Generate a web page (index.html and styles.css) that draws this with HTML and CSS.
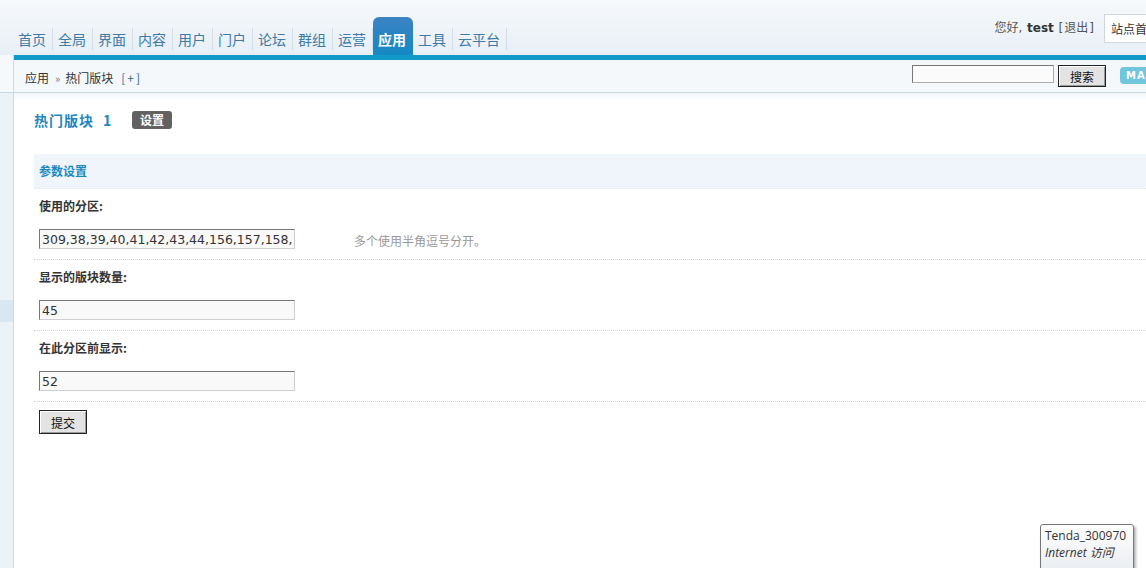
FILE: index.html
```html
<!DOCTYPE html>
<html lang="zh-CN">
<head>
  <meta charset="UTF-8" />
  <title>管理中心 - 热门版块</title>
  <link rel="stylesheet" href="styles.css">
</head>
<body>

<div class="page">
  <div class="header">
    <ul class="nav">
      <li><a href="#">首页</a></li>
      <li><a href="#">全局</a></li>
      <li><a href="#">界面</a></li>
      <li><a href="#">内容</a></li>
      <li><a href="#">用户</a></li>
      <li><a href="#">门户</a></li>
      <li><a href="#">论坛</a></li>
      <li><a href="#">群组</a></li>
      <li><a href="#">运营</a></li>
      <li class="on"><a href="#">应用</a></li>
      <li><a href="#">工具</a></li>
      <li><a href="#">云平台</a></li>
    </ul>
    <div class="userbar">
      <span class="hello">您好, <b>test</b> [<a href="#">退出</a>]</span>
      <a href="#" class="sitehome">站点首页</a>
    </div>
  </div>

  <div class="frame">
    <div class="side">
      <div class="side-top"></div>
      <div class="side-menu">
        <div class="side-item current"></div>
      </div>
    </div>

    <div class="main">
      <div class="blueline"></div>
      <div class="crumb">
        <div class="crumb-path">应用<em>&raquo;</em>热门版块<a href="#">[+]</a></div>
        <form class="search">
          <input type="text" class="search-txt">
          <button type="button" class="btn">搜索</button>
        </form>
        <span class="map">MAP</span>
      </div>

      <div class="content">
        <div class="title">
          <h3>热门版块<span class="num">1</span></h3>
          <span class="tag">设置</span>
        </div>

        <div class="tb">
          <div class="tb-head">参数设置</div>

          <div class="tb-row">
            <label class="tb-label">使用的分区:</label>
            <div class="tb-field">
              <input type="text" class="txt" value="309,38,39,40,41,42,43,44,156,157,158,159,160">
              <span class="tips">多个使用半角逗号分开。</span>
            </div>
          </div>

          <div class="tb-row">
            <label class="tb-label">显示的版块数量:</label>
            <div class="tb-field">
              <input type="text" class="txt" value="45">
            </div>
          </div>

          <div class="tb-row">
            <label class="tb-label">在此分区前显示:</label>
            <div class="tb-field">
              <input type="text" class="txt" value="52">
            </div>
          </div>

          <div class="tb-foot">
            <button type="button" class="btn submit">提交</button>
          </div>
        </div>
      </div>
    </div>
  </div>

  <div class="tip">
    <div>Tenda_300970</div>
    <div class="tip-sub">Internet 访问</div>
  </div>
</div>

</body>
</html>
```

FILE: styles.css
```css
html {
  overflow: hidden;
}

body {
  margin: 0;
  padding: 0;
  font-family: "DejaVu Sans", "Noto Sans CJK SC", sans-serif;
  font-size: 12px;
  color: #333;
  background: #fff;
}

a {
  text-decoration: none;
  color: inherit;
}

.page {
  width: 1180px;
  height: 568px;
  position: relative;
  display: flex;
  flex-direction: column;
}

/* header */
.header {
  height: 55px;
  display: flex;
  justify-content: space-between;
  background: linear-gradient(#f7f9fb, #e7eff6);
}

.nav {
  list-style: none;
  margin: 0;
  padding: 0 0 0 13px;
  display: flex;
  align-items: flex-end;
}

.nav li a {
  display: block;
  padding: 0 6px 0 5px;
  margin-bottom: 5px;
  line-height: 22px;
  font-family: "Noto Sans CJK SC", sans-serif;
  font-size: 14px;
  color: #3e7aa4;
  border-right: 1px solid #d3dee7;
}

.nav li.on a {
  padding-top: 11px;
  padding-bottom: 5px;
  margin-bottom: 0;
  color: #fff;
  font-weight: bold;
  border-right-color: transparent;
  border-radius: 6px 6px 0 0;
  background: linear-gradient(#3c82c2, #1589c4);
}

.userbar {
  display: flex;
  align-items: flex-start;
  padding: 14px 6px 0 0;
}

.hello {
  line-height: 28px;
  margin-right: 10px;
  color: #555;
  word-spacing: -1px;
}

.hello b {
  color: #333;
  margin: 0 2px;
}

.hello a {
  margin: 0 1px;
}

.sitehome {
  display: block;
  height: 27px;
  line-height: 27px;
  padding: 0 14px 0 6px;
  border: 1px solid #cfd6dc;
  background: #fff;
  font-family: "Noto Sans CJK SC", sans-serif;
  color: #333;
}

/* frame */
.frame {
  flex: 1;
  display: flex;
}

.side {
  width: 13px;
  border-right: 1px solid #c4dbeb;
  display: flex;
  flex-direction: column;
}

.side-top {
  height: 37px;
  background: #f6f9fb;
  border-bottom: 1px solid #c7d8e4;
}

.side-menu {
  flex: 1;
  background: #ebf3f9;
  padding-top: 207px;
}

.side-item {
  height: 22px;
}

.side-item.current {
  background: #d9e7f2;
}

.main {
  flex: 1;
  display: flex;
  flex-direction: column;
}

.blueline {
  height: 5px;
  background: #1399c9;
}

.crumb {
  height: 32px;
  display: flex;
  align-items: center;
  padding: 0 14px 0 11px;
  background: #f4f8fb;
  border-bottom: 1px solid #c7d8e4;
}

.crumb-path {
  flex: 1;
  padding-top: 3px;
  font-family: "Noto Sans CJK SC", sans-serif;
}

.crumb-path em {
  font-style: normal;
  color: #777;
  font-size: 11px;
  margin: 0 5px 0 6px;
}

.crumb-path a {
  color: #2c6d99;
  margin-left: 8px;
  letter-spacing: 2px;
}

.search {
  display: flex;
  align-items: flex-start;
  margin: 0 14px 0 0;
  height: 22px;
}

.search-txt {
  width: 138px;
  height: 14px;
  padding: 1px;
  margin: 0 4px 0 0;
  border: 1px solid #aaa;
  border-top-color: #777;
  border-left-color: #777;
  background: #fbfbfb;
}

.btn {
  width: 48px;
  height: 22px;
  padding: 0;
  font-family: "Noto Sans CJK SC", sans-serif;
  font-size: 12px;
  color: #111;
  background: #e3e3e3;
  border: 1px solid #222;
  box-shadow: inset 1px 1px 0 #fff, inset -1px -1px 0 #999;
  cursor: pointer;
}

.map {
  display: block;
  width: 40px;
  height: 17px;
  line-height: 17px;
  margin-bottom: 1px;
  padding-left: 6px;
  border-radius: 4px;
  background: #70c6dc;
  color: #fff;
  font-weight: bold;
  font-size: 10px;
  letter-spacing: 1px;
}

/* content */
.content {
  flex: 1;
  padding: 0 0 0 20px;
  background: linear-gradient(#f1f6fa, #fff 8px);
}

.title {
  display: flex;
  align-items: center;
  padding-top: 18px;
  height: 18px;
}

.title h3 {
  width: 98px;
  margin: 0;
  font-family: "Noto Sans CJK SC", sans-serif;
  font-size: 14px;
  line-height: 18px;
  color: #2286bf;
  letter-spacing: 1px;
}

.title .num {
  margin-left: 9px;
}

.tag {
  display: block;
  width: 40px;
  height: 18px;
  line-height: 18px;
  text-align: center;
  background: #616161;
  color: #fff;
  font-weight: bold;
  border-radius: 3px;
  font-family: "Noto Sans CJK SC", sans-serif;
}

.tb {
  margin-top: 25px;
}

.tb-head {
  height: 34px;
  line-height: 34px;
  padding-left: 5px;
  background: #eff5fb;
  border-bottom: 1px dotted #dfe8ef;
  font-family: "Noto Sans CJK SC", sans-serif;
  font-weight: bold;
  color: #1d89c0;
}

.tb-row {
  padding: 8px 5px 10px;
  border-bottom: 1px dotted #d6d6d6;
}

.tb-label {
  display: block;
  line-height: 18px;
  font-family: "Noto Sans CJK SC", sans-serif;
  font-weight: bold;
  color: #333;
}

.tb-field {
  display: flex;
  align-items: center;
  margin-top: 14px;
}

.txt {
  box-sizing: border-box;
  width: 256px;
  height: 20px;
  padding: 0 2px;
  margin: 0;
  font-family: "DejaVu Sans", sans-serif;
  font-size: 12.5px;
  color: #333;
  background: #f9f9f9;
  border: 1px solid #cfcfcf;
  border-top-color: #777;
  border-left-color: #777;
}

.tips {
  margin-left: 59px;
  padding-top: 2px;
  font-family: "Noto Sans CJK SC", sans-serif;
  color: #999;
}

.tb-foot {
  padding: 8px 5px;
}

.submit {
  height: 24px;
}

/* network tooltip */
.tip {
  position: absolute;
  left: 1040px;
  top: 524px;
  width: 84px;
  height: 46px;
  padding: 2px 4px;
  border: 1px solid #767676;
  border-radius: 3px;
  background: linear-gradient(#fff, #e8ebf0);
  box-shadow: 2px 2px 3px rgba(0, 0, 0, 0.3);
  font-family: "Open Sans", "Noto Sans CJK SC", sans-serif;
  font-size: 12px;
  line-height: 17px;
  color: #333;
}

.tip-sub {
  font-style: italic;
}
```
